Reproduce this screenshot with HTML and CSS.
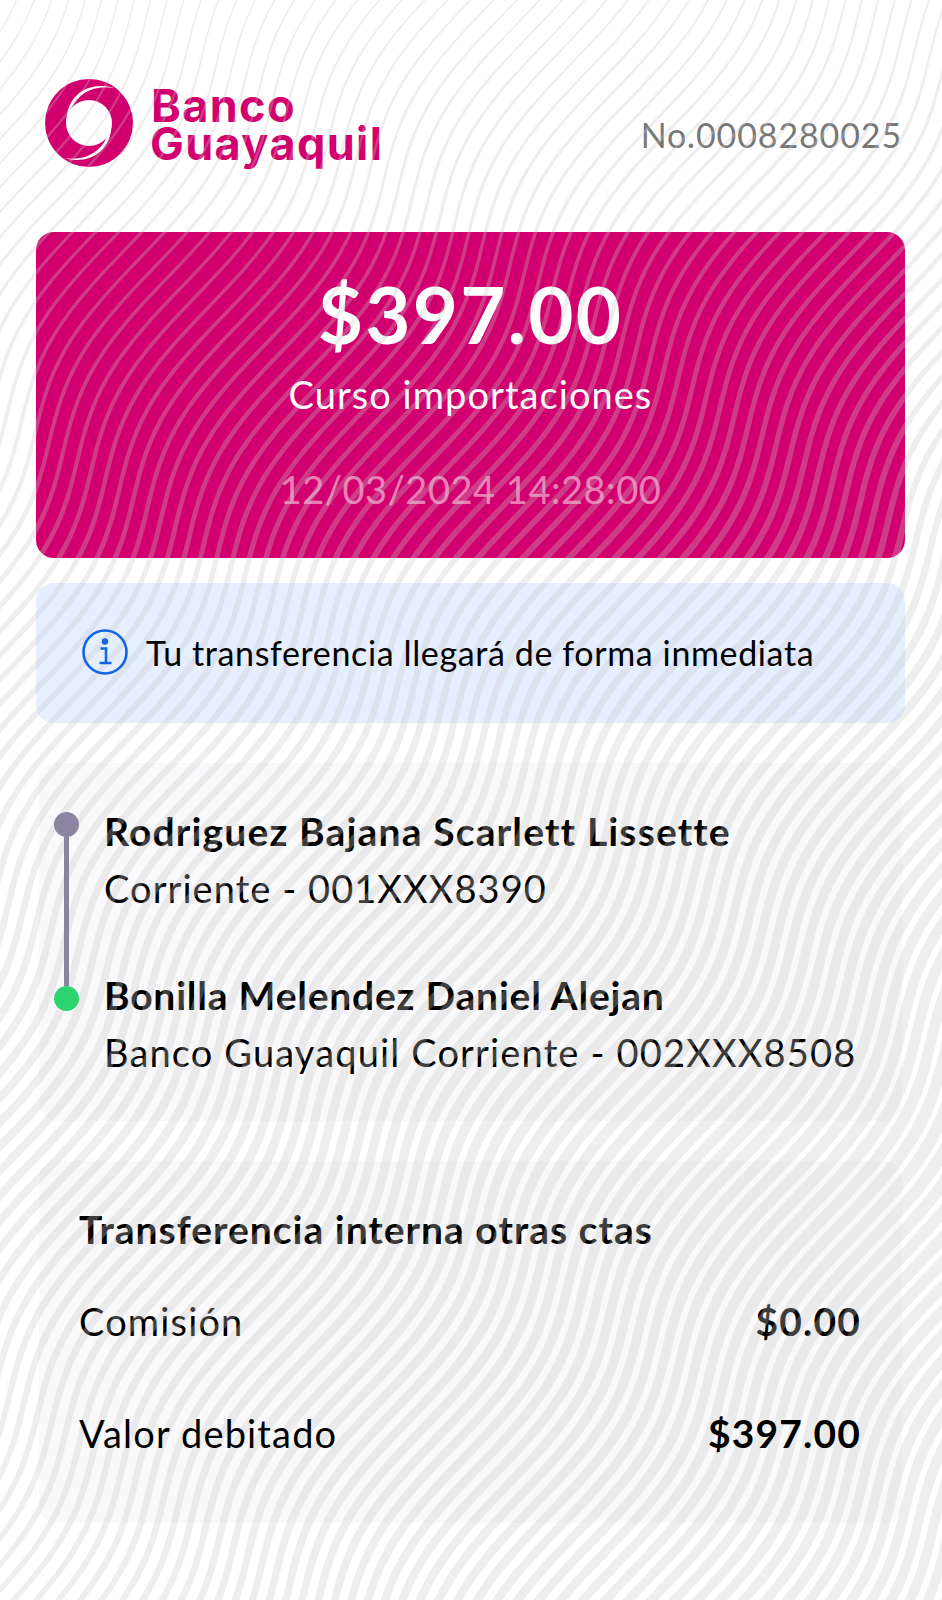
FILE: index.html
```
<!DOCTYPE html>
<html lang="es"><head><meta charset="utf-8"><title>Comprobante</title>
<link rel="stylesheet" href="styles.css"></head>
<body>
<main class="receipt">
  <header class="top">
    <div class="brand">
      <svg class="ring" viewBox="0 0 88 88"><circle cx="44" cy="44" r="44" fill="#d2006e"/><circle cx="44" cy="44" r="23" fill="#fff"/><g id="s" fill="#fff"><path d="M69 9C46 2 22 14 21.500 42L26.500 29C33 15 48 5.500 69 9Z"/></g><use href="#s" transform="rotate(180 44 44)"/></svg>
      <div class="name"><span class="n1">Banco</span><span class="n2">Guayaquil</span></div>
    </div>
    <span class="number">No.0008280025</span>
  </header>
  <section class="hero">
    <span class="amount">$397.00</span>
    <span class="concept">Curso importaciones</span>
    <span class="date">12/03/2024 14:28:00</span>
  </section>
  <section class="info">
    <svg class="i" viewBox="0 0 46 46" fill="none" stroke="#1464e8" stroke-width="2.600"><circle cx="23" cy="23" r="21.500"/><circle cx="23" cy="12.500" r="3.200" fill="#1464e8" stroke="none"/><path d="M18.500 19.500H24V34M17.500 34H29.500"/></svg>
    <span class="msg">Tu transferencia llegará de forma inmediata</span>
  </section>
  <section class="card parties">
    <div class="track"><i class="dot"></i><i class="bar"></i><i class="dot green"></i></div>
    <div class="people">
      <div class="person"><b class="from">Rodriguez Bajana Scarlett Lissette</b><span class="acc">Corriente - 001XXX8390</span></div>
      <div class="person"><b class="to">Bonilla Melendez Daniel Alejan</b><span>Banco Guayaquil Corriente - 002XXX8508</span></div>
    </div>
  </section>
  <section class="card detail">
    <b class="title">Transferencia interna otras ctas</b>
    <div class="row fee"><span>Comisión</span><b>$0.00</b></div>
    <div class="row total"><span>Valor debitado</span><b>$397.00</b></div>
  </section>
  <svg class="waves" viewBox="0 0 942 1600"><path id="w"/></svg>
</main>
<script src="waves.js"></script>
</body></html>
```
FILE: waves.js
```
// Guilloche-style waves: one curve repeated along a diagonal.
const V = 348, out = [];
function cover(x, y) {
  const base = y < 1130 ? 0.11 + 0.52 * y / 1130 : 0.63 - 0.1 * (y - 1130) / 430;
  const side = 0.78 + 0.38 * x / 942 - (y > 1130 && x < 300 ? (300 - x) / 300 * 0.2 * (y - 1130) / 430 : 0);
  return base * side;
}
for (let n = -80; n < 150; n++) {
  const x0 = 482 + 14 * n, y0 = 246 + 9.5 * n, l = [], r = [];
  for (let y = -10; y <= 1610; y += 10) {
    const t = 2 * Math.PI * (y - y0) / V;
    const x = x0 - 0.6 * (y - y0) + 0.36 * V / (2 * Math.PI) * Math.sin(t);
    if (x < -40 || x > 982) continue;
    const gap = 14 + 9.5 * (0.6 - 0.36 * Math.cos(t));
    const h = cover(x, Math.max(0, y)) * gap / 2;
    l.push((x - h).toFixed(1) + ' ' + y);
    r.unshift((x + h).toFixed(1) + ' ' + y);
  }
  if (l.length > 1) out.push('M' + l.concat(r).join('L') + 'Z');
}
document.getElementById('w').setAttribute('d', out.join(''));
```
FILE: styles.css
```
* { box-sizing: border-box; }
body { margin: 0; background: #fff; font-family: Lato, sans-serif; }
.receipt { position: relative; width: 942px; height: 1600px; padding: 79px 37px 0 36px; overflow: hidden; font-size: 38px; color: #000; }
.waves { position: absolute; inset: 0; width: 942px; height: 1600px; fill: rgba(198,198,198,.3); pointer-events: none; z-index: 1; }
.top { display: flex; justify-content: space-between; height: 153px; padding: 0 3px 0 9px; }
.brand { display: flex; gap: 17px; }
.ring { width: 88px; height: 88px; }
.name { display: flex; flex-direction: column; align-items: flex-start; color: #d2006e; font-family: Inter, sans-serif; font-size: 45px; font-weight: 700; line-height: 38px; padding-top: 8px; }
.n1 { letter-spacing: 1.4px; padding-left: 1px; }
.n2 { letter-spacing: 1.4px; }
.number { font-size: 34px; line-height: 40px; margin-top: 36px; color: #777; height: 40px; letter-spacing: .88px; }
.hero { height: 326px; border-radius: 18px; background: #d2006e; color: #fff; display: flex; flex-direction: column; align-items: center; padding-top: 37px; }
.amount { font-size: 78px; font-weight: 700; line-height: 90px; letter-spacing: 2.2px; }
.concept { line-height: 40px; margin-top: 15px; letter-spacing: 1.05px; }
.date { line-height: 40px; margin-top: 55px; opacity: .5; letter-spacing: .52px; }
.info { margin-top: 25px; height: 140px; border-radius: 18px; background: #e6efff; display: flex; align-items: center; padding-left: 46px; gap: 18px; }
.i { width: 46px; height: 46px; position: relative; z-index: 2; margin-top: -3px; }
.msg { font-size: 34px; line-height: 40px; position: relative; z-index: 2; letter-spacing: .62px; }
.card { margin: 40px 3px 0; border-radius: 18px; background: #f9f9fb; }
.card b { font-size: 39px; }
.parties { height: 358px; display: flex; padding: 49px 0 0 15px; gap: 25px; letter-spacing: 1.15px; }
.track { position: relative; z-index: 2; width: 25px; height: 199px; display: flex; flex-direction: column; align-items: center; }
.dot { width: 25px; height: 25px; border-radius: 50%; background: #8b85a1; }
.dot.green { background: #2bd46f; }
.bar { width: 5px; flex: 1; background: #8b85a1; }
.people { display: flex; flex-direction: column; gap: 49px; margin-top: -9.500px; }
.person { display: flex; flex-direction: column; align-items: flex-start; line-height: 57.500px; height: 115px; }
.from { letter-spacing: 1.15px; }
.acc { letter-spacing: 1.05px; }
.to { letter-spacing: .78px; }
.detail { height: 362px; padding: 48px 41px 0 40px; letter-spacing: 1.15px; }
.title { display: block; line-height: 40px; letter-spacing: 1px; }
.row { display: flex; justify-content: space-between; line-height: 40px; }
.fee { margin-top: 52px; }
.total { margin-top: 72px; position: relative; z-index: 2; }
```
